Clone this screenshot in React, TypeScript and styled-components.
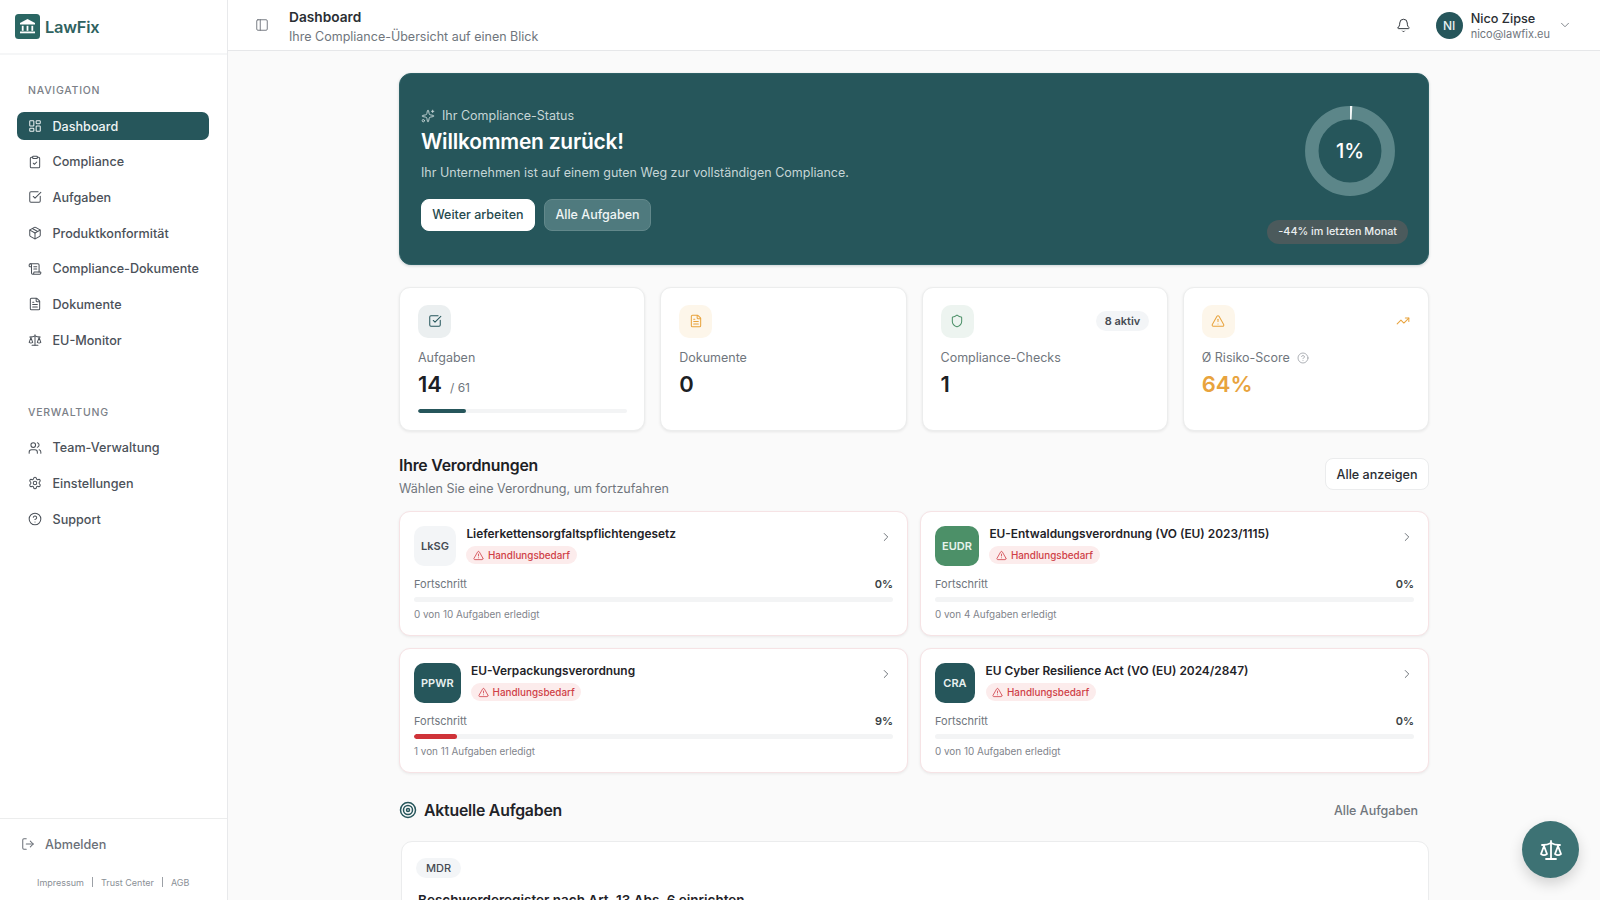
import React from "react";
import styled, { createGlobalStyle } from "styled-components";
import {
  LayoutDashboard, ClipboardCheck, SquareCheckBig, Package, ScrollText, FileText, Scale, Users, Settings,
  CircleHelp, LogOut, PanelLeft, Bell, ChevronDown, Sparkles, TriangleAlert, ChevronRight, Shield, TrendingUp, Target,
} from "lucide-react";

const Global = createGlobalStyle`
  html, body { margin: 0; padding: 0; height: 100%; overflow: hidden; }
  body { font-family: Inter, "Liberation Sans", sans-serif; color: #1c2024; background: #fafafa; }
  * { box-sizing: border-box; }
`;

const Shell = styled.div`display: flex; height: 900px; overflow: hidden;`;

const Sidebar = styled.aside`
  width: 228px; flex: none; height: 100%; background: #fff; border-right: 1px solid #e8e9eb;
  display: flex; flex-direction: column;
`;
const Brand = styled.div`
  height: 55px; flex: none; border-bottom: 2px solid #f5f6f7; padding: 14px 0 0 15px;
  display: flex; align-items: flex-start; gap: 5px;
`;
const BrandName = styled.span`font-size: 16.4px; font-weight: 600; color: #2f6260; line-height: 26px; letter-spacing: -0.2px;`;
const NavArea = styled.nav`flex: 1; padding: 29px 18px 0 17px;`;
const NavTitle = styled.div`
  font-size: 10.5px; font-weight: 500; letter-spacing: 0.75px; color: #7b8087; padding-left: 11px;
  height: 14px; line-height: 14px; margin-bottom: 14px;
`;
const NavList = styled.div`display: flex; flex-direction: column; gap: 7.7px; margin-bottom: 51.5px;`;
const NavItem = styled.div<{ $active?: boolean }>`
  height: 28px; border-radius: 7px; padding-left: 11px; display: flex; align-items: center; gap: 10.5px;
  font-size: 12.6px; font-weight: 500; color: ${(p) => (p.$active ? "#eef4f4" : "#4b5159")};
  background: ${(p) => (p.$active ? "#26565b" : "transparent")};
  svg { width: 14px; height: 14px; stroke-width: 1.75; flex: none; }
`;
const SideFoot = styled.div`height: 82px; flex: none; border-top: 1px solid #eceded; padding: 16px 0 0 21px;`;
const Logout = styled.div`
  display: flex; align-items: center; gap: 10px; font-size: 12.6px; font-weight: 500; color: #6b7078; height: 18px;
  svg { width: 14px; height: 14px; stroke-width: 1.75; }
`;
const Legal = styled.div`
  display: flex; align-items: center; gap: 8px; margin: 22px 0 0 16px; font-size: 9px; color: #8a8f96; height: 14px;
`;
const LegalSep = styled.span`width: 1px; height: 10px; background: #9ca0a6;`;

const Main = styled.div`flex: 1; min-width: 0; height: 100%; display: flex; flex-direction: column; overflow: hidden;`;
const Header = styled.header`
  height: 51px; flex: none; background: #fff; border-bottom: 1px solid #e6e7e9;
  display: flex; align-items: center; padding: 0 28px 0 27px;
`;
const Toggle = styled.div`display: flex; color: #666c73; margin-right: 20px; svg { width: 14px; height: 14px; stroke-width: 1.5; }`;
const HeaderText = styled.div`flex: 1; display: flex; flex-direction: column; gap: 2px; margin-top: 3px;`;
const PageTitle = styled.div`font-size: 13.7px; font-weight: 600; line-height: 17px; color: #2a2e33;`;
const PageSub = styled.div`font-size: 12.5px; line-height: 17px; color: #70767d;`;
const BellBox = styled.div`display: flex; color: #33383e; margin-right: 25px; svg { width: 15px; height: 15px; stroke-width: 1.6; }`;
const Avatar = styled.div`
  width: 27px; height: 27px; border-radius: 50%; background: #26565b; color: #e8f0f0; font-size: 12px; font-weight: 500;
  display: flex; align-items: center; justify-content: center; margin-right: 8px;
`;
const UserText = styled.div`display: flex; flex-direction: column; margin-right: 8px; margin-top: 1px;`;
const UserName = styled.div`font-size: 12.7px; font-weight: 500; line-height: 17px; color: #2a2e33;`;
const UserMail = styled.div`font-size: 11px; line-height: 15px; color: #70767d;`;
const Chev = styled.div`display: flex; color: #70767d; svg { width: 14px; height: 14px; stroke-width: 1.5; }`;

const Content = styled.main`width: 1030px; margin: 0 auto; padding-top: 21.5px; flex: 1; display: flex; flex-direction: column;`;

const Hero = styled.section`
  height: 192.5px; flex: none; background: #26565b; border-radius: 12px; border: 1px solid #2e6166;
  box-shadow: 0 1px 3px rgba(30,60,70,.2); padding: 33px 20px 0 21px; display: flex; justify-content: space-between;
`;
const HeroLeft = styled.div`display: flex; flex-direction: column; align-items: flex-start;`;
const HeroKicker = styled.div`
  display: flex; align-items: center; gap: 7px; font-size: 12.5px; color: #c5d5d6; line-height: 18px;
  svg { width: 14px; height: 14px; stroke-width: 1.6; }
`;
const HeroTitle = styled.h1`margin: 2px 0 0; font-size: 20.9px; font-weight: 600; color: #fff; line-height: 29px; letter-spacing: -0.2px;`;
const HeroDesc = styled.p`margin: 8px 0 0; font-size: 12.5px; color: #c5d5d6; line-height: 18px;`;
const HeroButtons = styled.div`display: flex; gap: 9.5px; margin-top: 17px;`;
const HeroBtn = styled.div<{ $ghost?: boolean }>`
  height: 32.5px; border-radius: 8px; padding: 0 10.2px; display: flex; align-items: center; font-size: 12.5px; font-weight: 500;
  background: ${(p) => (p.$ghost ? "#4f7a7e" : "#fff")}; color: ${(p) => (p.$ghost ? "#f0f5f5" : "#26494d")};
  border: 1px solid ${(p) => (p.$ghost ? "#62888b" : "#fff")};
`;
const HeroRight = styled.div`display: flex; flex-direction: column; align-items: flex-end; margin-top: -1px;`;
const Donut = styled.div`
  position: relative; width: 90px; height: 90px; margin-right: 13px; flex: none;
  svg { display: block; }
`;
const DonutLabel = styled.div`
  position: absolute; inset: 0; display: flex; align-items: center; justify-content: center;
  font-size: 20px; font-weight: 500; color: #fff;
`;
const TrendPill = styled.div`
  margin-top: 24px; height: 24px; border-radius: 12px; background: #4b5a5c; color: #eceff0; font-size: 10.8px; font-weight: 500;
  padding: 0 11px; display: flex; align-items: center;
`;

const Stats = styled.div`display: grid; grid-template-columns: repeat(4, 1fr); gap: 15px; margin-top: 21.5px; flex: none;`;
const StatCard = styled.div`
  height: 144px; background: #fff; border: 1px solid #eceded; border-radius: 11px; padding: 17px 17.5px 0 18px;
  box-shadow: 0 1px 3px rgba(0,0,0,.08);
`;
const StatTop = styled.div`display: flex; justify-content: space-between; align-items: center; height: 33px;`;
const StatIcon = styled.div<{ $bg: string; $fg: string }>`
  width: 33px; height: 33px; border-radius: 10px; background: ${(p) => p.$bg}; color: ${(p) => p.$fg};
  display: flex; align-items: center; justify-content: center;
  svg { width: 14px; height: 14px; stroke-width: 1.75; }
`;
const ActivePill = styled.div`
  height: 20px; border-radius: 10px; background: #f3f5f7; font-size: 11px; font-weight: 600; color: #464b52;
  padding: 0 9px; display: flex; align-items: center;
`;
const TrendIcon = styled.div`display: flex; color: #e8a33d; margin-right: 1px; svg { width: 14px; height: 14px; stroke-width: 1.75; }`;
const StatLabel = styled.div`
  display: flex; align-items: center; gap: 7px; font-size: 12.5px; color: #70767d; line-height: 18px; margin-top: 11px;
  svg { width: 12px; height: 12px; color: #9a9ea5; stroke-width: 1.6; }
`;
const StatValue = styled.div<{ $color?: string }>`
  display: flex; align-items: baseline; gap: 8px; font-size: 22px; font-weight: 600; line-height: 28px; margin-top: 3px;
  color: ${(p) => p.$color || "#1c2024"};
`;
const StatOf = styled.span`font-size: 12px; font-weight: 400; color: #70767d;`;
const StatBar = styled.div`height: 4px; border-radius: 2px; background: #f3f4f5; margin-top: 7.5px; overflow: hidden;`;
const StatFill = styled.div`height: 100%; background: #26565b; border-radius: 2px;`;

const SectionHead = styled.div`display: flex; justify-content: space-between; align-items: center; margin-top: 24px; flex: none;`;
const SectionTitle = styled.h2`margin: 0; font-size: 15.8px; font-weight: 600; line-height: 22px; color: #1c2024; letter-spacing: -0.2px;`;
const SectionSub = styled.p`margin: 3px 0 0; font-size: 12.55px; line-height: 18px; color: #70767d;`;
const OutlineBtn = styled.div`
  height: 32px; border-radius: 8px; border: 1px solid #ebeced; background: #fff; font-size: 12.6px; font-weight: 500;
  padding: 0 10.5px; display: flex; align-items: center; color: #2a2e33; margin-top: -4px;
`;

const RegGrid = styled.div`display: grid; grid-template-columns: repeat(2, 1fr); gap: 12px; margin-top: 13px; flex: none;`;
const RegCard = styled.div`
  height: 125px; background: #fff; border: 1px solid #f6e3e5; border-radius: 11px; padding: 14.5px 14px 0;
  box-shadow: 0 1px 3px rgba(0,0,0,.07);
`;
const RegTop = styled.div`display: flex; align-items: flex-start; height: 40px;`;
const RegLogo = styled.div<{ $bg: string; $fg: string }>`
  height: 40px; min-width: 40px; padding: 0 7px; border-radius: 10px; background: ${(p) => p.$bg}; color: ${(p) => p.$fg};
  font-size: 11px; font-weight: 600; display: flex; align-items: center; justify-content: center; flex: none; margin-right: 10.5px;
`;
const RegInfo = styled.div`flex: 1; display: flex; flex-direction: column; align-items: flex-start; gap: 4px;`;
const RegName = styled.div`font-size: 11.9px; font-weight: 600; line-height: 17px; color: #1f2328; margin-top: -1px;`;
const AlertPill = styled.div`
  height: 18px; border-radius: 9px; background: #fcecec; color: #cf3f47; font-size: 9.9px; font-weight: 500;
  padding: 0 6.5px; display: flex; align-items: center; gap: 4px;
  svg { width: 11px; height: 11px; stroke-width: 1.75; }
`;
const RegChevron = styled.div`display: flex; color: #5c6168; margin: 4px 0 0 0; svg { width: 14px; height: 14px; stroke-width: 1.5; }`;
const ProgHead = styled.div`display: flex; justify-content: space-between; align-items: center; margin-top: 9.5px; height: 16px; font-size: 11px; color: #70767d;`;
const ProgPct = styled.span`font-weight: 600; color: #3a3f45;`;
const ProgBar = styled.div`height: 5px; border-radius: 3px; background: #f3f4f5; margin-top: 5px; overflow: hidden;`;
const ProgFill = styled.div`height: 100%; background: #cf3339; border-radius: 3px;`;
const ProgFoot = styled.div`font-size: 9.9px; color: #7f848b; line-height: 14px; margin-top: 5px;`;

const TaskHead = styled.div`display: flex; justify-content: space-between; align-items: center; margin-top: 24.5px; height: 26px; flex: none;`;
const TaskTitle = styled.h2`
  margin: 0; display: flex; align-items: center; gap: 7px; font-size: 15.8px; font-weight: 600; color: #1f2328; letter-spacing: -0.2px;
  svg { width: 18px; height: 18px; color: #26565b; stroke-width: 2; }
`;
const TaskLink = styled.div`font-size: 12.5px; font-weight: 500; color: #70767d; padding-right: 11px;`;
const TaskCard = styled.div`
  margin: 17.5px 0 0 2px; height: 140px; flex: none; background: #fff; border: 1px solid #ebeced; border-radius: 11px; padding: 14px 16px 0;
`;
const TaskTag = styled.div`
  display: inline-flex; height: 20px; align-items: center; border-radius: 10px; background: #f3f5f7; font-size: 11px; font-weight: 500;
  color: #464b52; padding: 0 10px; margin-left: -2px;
`;
const TaskName = styled.div`font-size: 13.5px; font-weight: 600; color: #1f2328; line-height: 18px; margin-top: 13.5px;`;

const Fab = styled.div`
  position: fixed; right: 21px; bottom: 22px; width: 57px; height: 57px; border-radius: 50%; background: #3d7274; color: #fff;
  display: flex; align-items: center; justify-content: center; box-shadow: 0 6px 14px rgba(0,0,0,.16);
  svg { width: 24px; height: 24px; stroke-width: 1.8; }
`;

const nav1 = [
  { icon: LayoutDashboard, label: "Dashboard", active: true },
  { icon: ClipboardCheck, label: "Compliance" },
  { icon: SquareCheckBig, label: "Aufgaben" },
  { icon: Package, label: "Produktkonformität" },
  { icon: ScrollText, label: "Compliance-Dokumente" },
  { icon: FileText, label: "Dokumente" },
  { icon: Scale, label: "EU-Monitor" },
];
const nav2 = [
  { icon: Users, label: "Team-Verwaltung" },
  { icon: Settings, label: "Einstellungen" },
  { icon: CircleHelp, label: "Support" },
];
const regs = [
  { code: "LkSG", bg: "#f3f5f7", fg: "#464b52", name: "Lieferkettensorgfaltspflichtengesetz", pct: 0, foot: "0 von 10 Aufgaben erledigt" },
  { code: "EUDR", bg: "#4c9068", fg: "#e8f3ec", name: "EU-Entwaldungsverordnung (VO (EU) 2023/1115)", pct: 0, foot: "0 von 4 Aufgaben erledigt" },
  { code: "PPWR", bg: "#26565b", fg: "#e8f0f0", name: "EU-Verpackungsverordnung", pct: 9, foot: "1 von 11 Aufgaben erledigt" },
  { code: "CRA", bg: "#26565b", fg: "#e8f0f0", name: "EU Cyber Resilience Act (VO (EU) 2024/2847)", pct: 0, foot: "0 von 10 Aufgaben erledigt" },
];

function LogoMark() {
  return (
    <svg width="25" height="25" viewBox="0 0 25 25" aria-hidden="true">
      <rect width="25" height="25" rx="3.5" fill="#2a6663" />
      <path d="M12.5 5 L20 9 V10.5 H5 V9 Z" fill="#fff" />
      <rect x="6.8" y="11.8" width="1.8" height="5" fill="#fff" />
      <rect x="11.6" y="11.8" width="1.8" height="5" fill="#fff" />
      <rect x="16.4" y="11.8" width="1.8" height="5" fill="#fff" />
      <rect x="5" y="17.5" width="15" height="1.8" fill="#fff" />
    </svg>
  );
}

export default function App() {
  return (
    <>
      <Global />
      <Shell>
        <Sidebar>
          <Brand><LogoMark /><BrandName>LawFix</BrandName></Brand>
          <NavArea>
            <NavTitle>NAVIGATION</NavTitle>
            <NavList>
              {nav1.map((n) => (
                <NavItem key={n.label} $active={n.active}><n.icon />{n.label}</NavItem>
              ))}
            </NavList>
            <NavTitle>VERWALTUNG</NavTitle>
            <NavList>
              {nav2.map((n) => (
                <NavItem key={n.label}><n.icon />{n.label}</NavItem>
              ))}
            </NavList>
          </NavArea>
          <SideFoot>
            <Logout><LogOut />Abmelden</Logout>
            <Legal>
              <span>Impressum</span><LegalSep /><span>Trust Center</span><LegalSep /><span>AGB</span>
            </Legal>
          </SideFoot>
        </Sidebar>
        <Main>
          <Header>
            <Toggle><PanelLeft /></Toggle>
            <HeaderText>
              <PageTitle>Dashboard</PageTitle>
              <PageSub>Ihre Compliance-Übersicht auf einen Blick</PageSub>
            </HeaderText>
            <BellBox><Bell /></BellBox>
            <Avatar>NI</Avatar>
            <UserText>
              <UserName>Nico Zipse</UserName>
              <UserMail>nico@lawfix.eu</UserMail>
            </UserText>
            <Chev><ChevronDown /></Chev>
          </Header>
          <Content>
            <Hero>
              <HeroLeft>
                <HeroKicker><Sparkles />Ihr Compliance-Status</HeroKicker>
                <HeroTitle>Willkommen zurück!</HeroTitle>
                <HeroDesc>Ihr Unternehmen ist auf einem guten Weg zur vollständigen Compliance.</HeroDesc>
                <HeroButtons>
                  <HeroBtn>Weiter arbeiten</HeroBtn>
                  <HeroBtn $ghost>Alle Aufgaben</HeroBtn>
                </HeroButtons>
              </HeroLeft>
              <HeroRight>
                <Donut>
                  <svg width="90" height="90" viewBox="0 0 90 90" aria-hidden="true">
                    <circle cx="45" cy="45" r="38.2" fill="none" stroke="#5c8689" strokeWidth="13.5" />
                    <circle cx="45" cy="45" r="38.2" fill="none" stroke="#f2f6f6" strokeWidth="13.5" strokeDasharray="2 238" transform="rotate(-90 45 45)" />
                  </svg>
                  <DonutLabel>1%</DonutLabel>
                </Donut>
                <TrendPill>-44% im letzten Monat</TrendPill>
              </HeroRight>
            </Hero>

            <Stats>
              <StatCard>
                <StatTop><StatIcon $bg="#ebeff0" $fg="#26565b"><SquareCheckBig /></StatIcon></StatTop>
                <StatLabel>Aufgaben</StatLabel>
                <StatValue>14<StatOf>/ 61</StatOf></StatValue>
                <StatBar><StatFill style={{ width: `${(14 / 61) * 100}%` }} /></StatBar>
              </StatCard>
              <StatCard>
                <StatTop><StatIcon $bg="#fdf6ea" $fg="#e8a33d"><FileText /></StatIcon></StatTop>
                <StatLabel>Dokumente</StatLabel>
                <StatValue>0</StatValue>
              </StatCard>
              <StatCard>
                <StatTop>
                  <StatIcon $bg="#edf4f0" $fg="#4c9068"><Shield /></StatIcon>
                  <ActivePill>8 aktiv</ActivePill>
                </StatTop>
                <StatLabel>Compliance-Checks</StatLabel>
                <StatValue>1</StatValue>
              </StatCard>
              <StatCard>
                <StatTop>
                  <StatIcon $bg="#fdf6ea" $fg="#e8a33d"><TriangleAlert /></StatIcon>
                  <TrendIcon><TrendingUp /></TrendIcon>
                </StatTop>
                <StatLabel>Ø Risiko-Score<CircleHelp /></StatLabel>
                <StatValue $color="#e8a33d">64%</StatValue>
              </StatCard>
            </Stats>

            <SectionHead>
              <div>
                <SectionTitle>Ihre Verordnungen</SectionTitle>
                <SectionSub>Wählen Sie eine Verordnung, um fortzufahren</SectionSub>
              </div>
              <OutlineBtn>Alle anzeigen</OutlineBtn>
            </SectionHead>

            <RegGrid>
              {regs.map((r) => (
                <RegCard key={r.code}>
                  <RegTop>
                    <RegLogo $bg={r.bg} $fg={r.fg}>{r.code}</RegLogo>
                    <RegInfo>
                      <RegName>{r.name}</RegName>
                      <AlertPill><TriangleAlert />Handlungsbedarf</AlertPill>
                    </RegInfo>
                    <RegChevron><ChevronRight /></RegChevron>
                  </RegTop>
                  <ProgHead><span>Fortschritt</span><ProgPct>{r.pct}%</ProgPct></ProgHead>
                  <ProgBar>{r.pct > 0 && <ProgFill style={{ width: `${r.pct}%` }} />}</ProgBar>
                  <ProgFoot>{r.foot}</ProgFoot>
                </RegCard>
              ))}
            </RegGrid>

            <TaskHead>
              <TaskTitle><Target />Aktuelle Aufgaben</TaskTitle>
              <TaskLink>Alle Aufgaben</TaskLink>
            </TaskHead>
            <TaskCard>
              <TaskTag>MDR</TaskTag>
              <TaskName>Beschwerderegister nach Art. 13 Abs. 6 einrichten</TaskName>
            </TaskCard>
          </Content>
        </Main>
        <Fab><Scale /></Fab>
      </Shell>
    </>
  );
}
